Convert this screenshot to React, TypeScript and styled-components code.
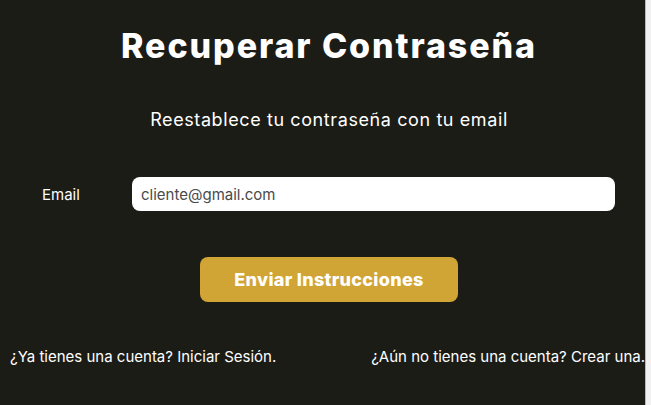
import React from "react";
import styled, { createGlobalStyle } from "styled-components";

const Global = createGlobalStyle`
  html, body { margin: 0; padding: 0; background: #f1f1f1; }
  body { font-family: Inter, "Noto Sans", sans-serif; }
  * { box-sizing: border-box; }
`;

const Shell = styled.div`
  display: flex;
  width: 651px;
  height: 405px;
`;

const Panel = styled.main`
  width: 646px;
  height: 405px;
  background: #1c1c17;
  overflow: hidden;
  border-right: 1px solid #b9b9b9;
`;

const Inner = styled.div`
  width: 658px;
  display: flex;
  flex-direction: column;
  align-items: center;
  padding-top: 24px;
`;

const Title = styled.h1`
  margin: 0;
  color: #ffffff;
  font-size: 34px;
  font-weight: 800;
  line-height: 44px;
  letter-spacing: 1.9px;
`;

const Subtitle = styled.p`
  margin: 40px 0 0;
  color: #ffffff;
  font-size: 18px;
  font-weight: 400;
  line-height: 24px;
  letter-spacing: 0.6px;
`;

const Form = styled.form`
  margin-top: 45px;
  width: 100%;
  display: flex;
  flex-direction: column;
  align-items: center;
`;

const Row = styled.div`
  width: 100%;
  display: flex;
  align-items: center;
  padding-left: 42px;
`;

const Label = styled.label`
  width: 90px;
  color: #ffffff;
  font-size: 15px;
`;

const Input = styled.input`
  width: 483px;
  height: 34px;
  border: none;
  border-radius: 8px;
  background: #ffffff;
  padding: 0 9px;
  font-family: Inter, "Noto Sans", sans-serif;
  font-size: 15px;
  color: #4a4a4a;
  outline: none;
`;

const Button = styled.button`
  margin-top: 46px;
  width: 258px;
  height: 45px;
  border: none;
  border-radius: 8px;
  background: #d1a535;
  color: #ffffff;
  font-family: Inter, "Noto Sans", sans-serif;
  font-size: 18px;
  font-weight: 800;
  letter-spacing: 0.3px;
`;

const Links = styled.div`
  margin-top: 45px;
  width: 100%;
  display: flex;
  justify-content: space-between;
  padding: 0 13px 0 10px;
`;

const LinkText = styled.a`
  color: #ffffff;
  font-size: 15px;
  text-decoration: none;
  line-height: 20px;
`;

export default function App() {
  return (
    <>
      <Global />
      <Shell>
        <Panel>
          <Inner>
            <Title>Recuperar Contraseña</Title>
            <Subtitle>Reestablece tu contraseña con tu email</Subtitle>
            <Form onSubmit={(e) => e.preventDefault()}>
              <Row>
                <Label htmlFor="email">Email</Label>
                <Input id="email" type="email" defaultValue="cliente@gmail.com" />
              </Row>
              <Button type="submit">Enviar Instrucciones</Button>
            </Form>
            <Links>
              <LinkText>¿Ya tienes una cuenta? Iniciar Sesión.</LinkText>
              <LinkText>¿Aún no tienes una cuenta? Crear una.</LinkText>
            </Links>
          </Inner>
        </Panel>
      </Shell>
    </>
  );
}
